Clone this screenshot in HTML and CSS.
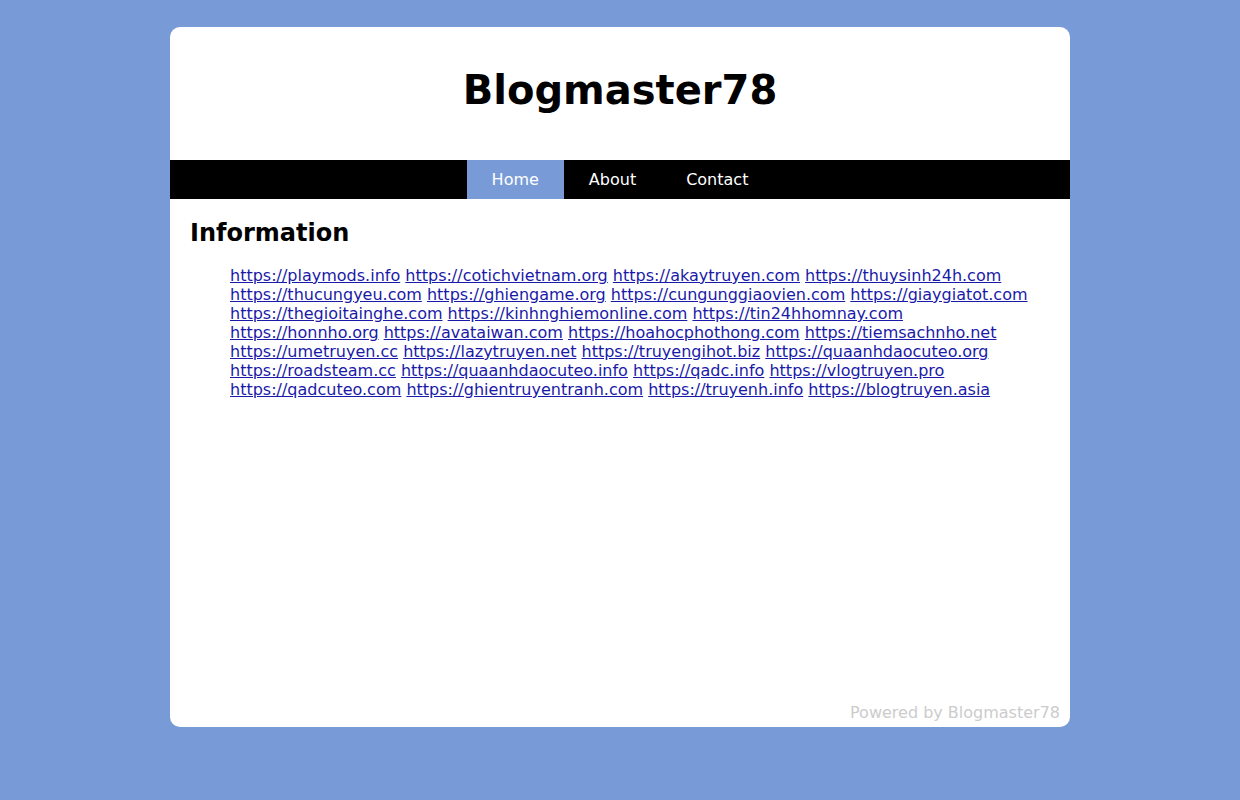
FILE: index.html
```html
<!DOCTYPE html>
<html lang="en">
<head>
<meta charset="utf-8">
<title>Blogmaster78</title>
<link rel="stylesheet" href="styles.css">
</head>
<body>
<div class="page">
  <header class="header">
    <h1 class="title">Blogmaster78</h1>
  </header>
  <nav class="nav">
    <a class="nav-item active" href="#">Home</a>
    <a class="nav-item" href="#">About</a>
    <a class="nav-item" href="#">Contact</a>
  </nav>
  <main class="content">
    <h2 class="heading">Information</h2>
    <div class="links">
      <a href="#">https://playmods.info</a> <a href="#">https://cotichvietnam.org</a> <a href="#">https://akaytruyen.com</a> <a href="#">https://thuysinh24h.com</a> <a href="#">https://thucungyeu.com</a> <a href="#">https://ghiengame.org</a> <a href="#">https://cungunggiaovien.com</a> <a href="#">https://giaygiatot.com</a> <a href="#">https://thegioitainghe.com</a> <a href="#">https://kinhnghiemonline.com</a> <a href="#">https://tin24hhomnay.com</a> <a href="#">https://honnho.org</a> <a href="#">https://avataiwan.com</a> <a href="#">https://hoahocphothong.com</a> <a href="#">https://tiemsachnho.net</a> <a href="#">https://umetruyen.cc</a> <a href="#">https://lazytruyen.net</a> <a href="#">https://truyengihot.biz</a> <a href="#">https://quaanhdaocuteo.org</a> <a href="#">https://roadsteam.cc</a> <a href="#">https://quaanhdaocuteo.info</a> <a href="#">https://qadc.info</a> <a href="#">https://vlogtruyen.pro</a> <a href="#">https://qadcuteo.com</a> <a href="#">https://ghientruyentranh.com</a> <a href="#">https://truyenh.info</a> <a href="#">https://blogtruyen.asia</a>
    </div>
  </main>
  <footer class="footer">Powered by Blogmaster78</footer>
</div>
</body>
</html>
```

FILE: styles.css
```css
html, body {
  margin: 0;
  padding: 0;
}
body {
  background: #789bd8;
  font-family: "DejaVu Sans", sans-serif;
  font-size: 16px;
}
.page {
  width: 900px;
  height: 700px;
  margin: 27px auto 0;
  background: #fff;
  border-radius: 10px;
  display: flex;
  flex-direction: column;
  overflow: hidden;
}
.header {
  padding: 40px 0 46px;
  text-align: center;
}
.title {
  margin: 0;
  font-size: 40px;
  font-weight: bold;
  line-height: 47px;
  color: #000;
}
.nav {
  background: #000;
  display: flex;
  justify-content: center;
}
.nav-item {
  display: block;
  padding: 10px 25px;
  line-height: 19px;
  color: #fff;
  text-decoration: none;
}
.nav-item.active {
  background: #789bd8;
}
.content {
  flex: 1;
  padding: 20px 20px 0;
}
.heading {
  margin: 0 0 19px;
  font-size: 24px;
  line-height: 28px;
  font-weight: bold;
  color: #000;
}
.links {
  padding-left: 40px;
  line-height: 19px;
}
.links a {
  color: #1a1aa8;
}
.footer {
  padding: 0 10px 5px;
  text-align: right;
  color: #ccc;
  line-height: 19px;
}
```
